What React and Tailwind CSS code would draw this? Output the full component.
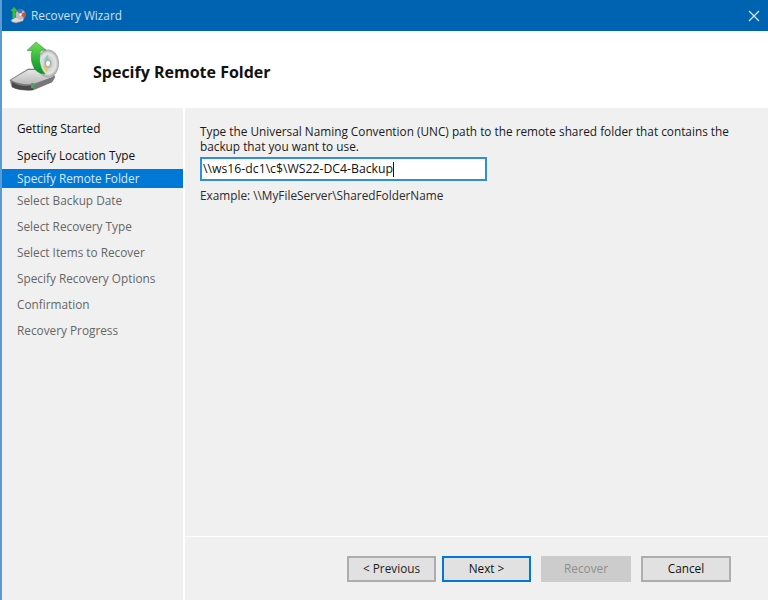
import React from "react";

const F = { fontFamily: '"Open Sans", "Noto Sans", sans-serif' };

function DiskIcon() {
  return (
    <svg width="54" height="52" viewBox="7 39 54 52">
      <defs>
        <linearGradient id="top" x1="0" y1="0" x2="0" y2="1">
          <stop offset="0" stopColor="#e6e6e6" />
          <stop offset="1" stopColor="#b9b9b9" />
        </linearGradient>
        <linearGradient id="arrow" x1="0" y1="0" x2="0" y2="1">
          <stop offset="0" stopColor="#74dc52" />
          <stop offset="0.6" stopColor="#27b039" />
          <stop offset="1" stopColor="#0e8f2a" />
        </linearGradient>
        <radialGradient id="cd" cx="0.5" cy="0.5" r="0.5">
          <stop offset="0.14" stopColor="#ffffff" />
          <stop offset="0.22" stopColor="#a5a5a5" />
          <stop offset="0.4" stopColor="#cfd8cc" />
          <stop offset="0.72" stopColor="#e4e4e4" />
          <stop offset="1" stopColor="#a2a2a2" />
        </radialGradient>
      </defs>
      <path d="M10 78 L28 67 L50 67 L55 75 L52 80 L33 88 Q20 89 12 85 Z" fill="#7d7d7d" stroke="#6f6f6f" strokeWidth="0.5" />
      <path d="M11 78 L28 68 L49 68 L53 75 L33 82 Q19 83 11 78 Z" fill="url(#top)" />
      <path d="M12 80 Q22 86 33 83 L33 88 Q20 89 12 85 Z" fill="#4a4a4a" />
      <path d="M33 83 L53 75 L52 80 L33 88 Z" fill="#777777" />
      <rect x="31" y="81" width="3" height="5" fill="#2dbb3a" />
      <ellipse cx="48" cy="61.5" rx="11" ry="14" fill="url(#cd)" />
      <path d="M44 58 L48 52 L49 61 Z" fill="#79c6d6" opacity="0.85" />
      <path d="M43 64 L48 63 L47 71 Z" fill="#e2c055" opacity="0.85" />
      <ellipse cx="48" cy="61.5" rx="2.5" ry="3.2" fill="#fff" stroke="#8a8a8a" strokeWidth="0.6" />
      <path d="M36 40 L46 48 L41 48.5 Q38.5 52 39.5 59 Q40.5 67 45 72 Q35 72 32 61 Q30.5 54 32 48.5 L27 48.5 Z" fill="url(#arrow)" stroke="#12882a" strokeWidth="0.5" />
    </svg>
  );
}

function SmallIcon() {
  return (
    <svg width="17" height="17" viewBox="0 0 17 17">
      <path d="M1 13 L6 10 L14 11 L13 14 L6 16 L2 15 Z" fill="#d9d9d9" stroke="#777" strokeWidth="0.5" />
      <circle cx="10.5" cy="7.5" r="5" fill="#c7b6c2" />
      <path d="M10.5 7.5 L15 5 A5 5 0 0 1 14 11 Z" fill="#c4553f" />
      <path d="M10.5 7.5 L7 4 A5 5 0 0 1 13 3 Z" fill="#4f6fb0" />
      <circle cx="10.5" cy="7.5" r="1.2" fill="#fff" />
      <path d="M4 0 L7.5 4 L5.5 4 L5.5 11 L2.5 11 L2.5 4 L0.5 4 Z" fill="#35c23a" />
    </svg>
  );
}

const steps = [
  { t: "Getting Started", c: "text-[#111111]", r: "h-[26px]" },
  { t: "Specify Location Type", c: "text-[#111111]", r: "h-[27px]" },
  { t: "Specify Remote Folder", c: "text-[#d8e9fa] bg-[#0078d7]", r: "h-[19px]" },
  { t: "Select Backup Date", c: "text-[#666666]", r: "h-[26px]" },
  { t: "Select Recovery Type", c: "text-[#666666]", r: "h-[26px]" },
  { t: "Select Items to Recover", c: "text-[#666666]", r: "h-[26px]" },
  { t: "Specify Recovery Options", c: "text-[#666666]", r: "h-[26px]" },
  { t: "Confirmation", c: "text-[#666666]", r: "h-[26px]" },
  { t: "Recovery Progress", c: "text-[#666666]", r: "h-[26px]" },
];

function Btn({ children, cls, w }) {
  return (
    <div className={`h-[26px] flex items-center justify-center text-[11.8px] border-2 ${w} ${cls}`}>
      {children}
    </div>
  );
}

export default function App() {
  return (
    <div style={F} className="w-[768px] h-[600px] overflow-hidden flex flex-col bg-[#f0f0f0] border-l-2 border-[#5b9bd5]">
      <div className="h-[31px] -ml-[2px] shrink-0 bg-[#0063b1] flex items-center pl-[10px] pr-[8px]">
        <SmallIcon />
        <span className="ml-[4px] text-[11.8px] text-[#cfe0f0]">Recovery Wizard</span>
        <svg className="ml-auto" width="12" height="12" viewBox="0 0 12 12">
          <path d="M1 1 L11 11 M11 1 L1 11" stroke="#d6e6f5" strokeWidth="1.3" />
        </svg>
      </div>
      <div className="h-[77px] shrink-0 bg-white flex items-center relative">
        <div className="ml-[5px] mt-[-6px] w-[54px] shrink-0"><DiskIcon /></div>
        <h1 className="ml-[32px] mt-[5px] text-[16px] font-bold text-[#111]">Specify Remote Folder</h1>
      </div>
      <div className="flex-1 flex min-h-0">
        <div className="w-[181px] shrink-0 pt-[8px] border-r-0">
          {steps.map((s) => (
            <div key={s.t} className={`${s.r} ${s.c} pl-[15px] flex items-center text-[11.8px] leading-none`}>
              {s.t}
            </div>
          ))}
        </div>
        <div className="w-[2px] bg-white shrink-0" />
        <div className="flex-1 flex flex-col min-w-0">
          <div className="flex-1 pl-[15px] pt-[16px] pr-[30px]">
            <p className="text-[11.8px] leading-[15px] text-[#1a1a1a]">
              Type the Universal Naming Convention (UNC) path to the remote shared folder that contains the backup that you want to use.
            </p>
            <div className="mt-[3px] w-[287px] h-[24px] bg-white border-2 border-[#2f8fdc] flex items-center pl-[1px] text-[12.25px] text-[#111]">
              <span>\\ws16-dc1\c$\WS22-DC4-Backup</span>
              <span className="w-px h-[15px] bg-[#111]" />
            </div>
            <p className="mt-[6px] text-[11.8px] leading-[16px] text-[#2a2a2a]">Example: \\MyFileServer\SharedFolderName</p>
          </div>
          <div className="h-[64px] shrink-0 border-t border-white flex items-start pt-[19px] pl-[162px]">
            <Btn w="w-[89px]" cls="bg-[#e1e1e1] border-[#adadad] text-[#222]">&lt; Previous</Btn>
            <Btn w="w-[89px] ml-[6px]" cls="bg-[#e1e1e1] border-[#0078d7] text-[#111]">Next &gt;</Btn>
            <Btn w="w-[90px] ml-[10px]" cls="bg-[#cccccc] border-[#cccccc] text-[#8f8f8f]">Recover</Btn>
            <Btn w="w-[90px] ml-[10px]" cls="bg-[#e1e1e1] border-[#adadad] text-[#111]">Cancel</Btn>
          </div>
        </div>
      </div>
    </div>
  );
}
